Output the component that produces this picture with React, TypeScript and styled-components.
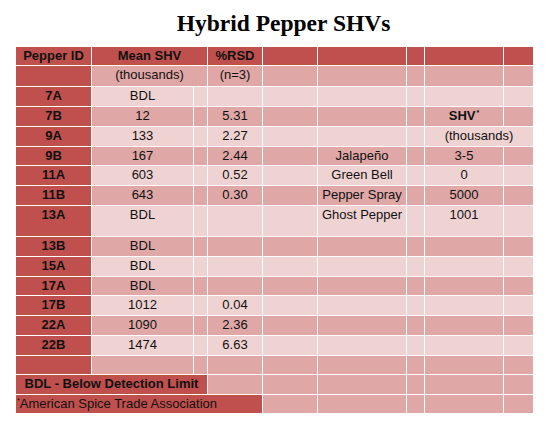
import React from 'react'
import styled, { createGlobalStyle } from 'styled-components'

const GlobalStyle = createGlobalStyle`
  html, body {
    margin: 0;
    padding: 0;
    background: #fff;
  }
`

type Tone = 'dark' | 'mid' | 'light'

const tones: Record<Tone, string> = {
  dark: '#c0504d',
  mid: '#dfa7a6',
  light: '#efd3d2',
}

const Page = styled.div`
  width: 550px;
  height: 423px;
  box-sizing: border-box;
  padding: 9px 0 0 16px;
  font-family: 'Liberation Sans', Arial, sans-serif;
  color: #111;
`

const Title = styled.h1`
  margin: 0 0 10px;
  width: 517px;
  box-sizing: border-box;
  padding-left: 18px;
  height: 28px;
  line-height: 28px;
  text-align: center;
  font-family: 'Liberation Serif', 'Times New Roman', serif;
  font-weight: bold;
  font-size: 23.5px;
  color: #000;
`

const Table = styled.div`
  width: 517px;
  display: flex;
  flex-direction: column;
  gap: 1px;
  background: #fff;
`

const Row = styled.div<{ $h: number }>`
  display: grid;
  grid-template-columns: 75px 101px 13px 54px 54px 88px 17px 78px 29px;
  column-gap: 1px;
  height: ${(p) => p.$h}px;
`

const Cell = styled.div<{ $tone: Tone; $span: number; $bold: boolean; $left: boolean }>`
  grid-column: span ${(p) => p.$span};
  background: ${(p) => tones[p.$tone]};
  box-sizing: border-box;
  padding: 1px 0 0 ${(p) => (p.$left ? '1px' : '0')};
  font-size: 13px;
  line-height: 15px;
  font-weight: ${(p) => (p.$bold ? 'bold' : 'normal')};
  text-align: ${(p) => (p.$left ? 'left' : 'center')};
  white-space: nowrap;
  overflow: visible;
`

const Sup = styled.span`
  font-size: 7px;
  line-height: 0;
  vertical-align: 5px;
  margin-left: 1px;
`

const Mark = styled.span`
  font-size: 7px;
  line-height: 0;
  vertical-align: 5px;
`

interface CellData {
  text?: React.ReactNode
  span?: number
  tone?: Tone
  bold?: boolean
  left?: boolean
}

interface RowData {
  h: number
  tone: Tone
  cells: CellData[]
}

// a body row: id, mean, gap, rsd, gap, pepper, gap, shv, gap
const bodyRow = (
  h: number,
  tone: Tone,
  id: string,
  mean = '',
  rsd = '',
  pepper = '',
  shv: React.ReactNode = '',
): RowData => ({
  h,
  tone,
  cells: [
    { text: id, tone: 'dark', bold: true },
    { text: mean },
    {},
    { text: rsd },
    {},
    { text: pepper },
    {},
    { text: shv },
    {},
  ],
})

const rows: RowData[] = [
  {
    h: 18,
    tone: 'dark',
    cells: [
      { text: 'Pepper ID', bold: true },
      { text: 'Mean SHV', span: 2, bold: true },
      { text: '%RSD', bold: true },
      {},
      {},
      {},
      {},
      {},
    ],
  },
  {
    h: 20,
    tone: 'mid',
    cells: [
      { tone: 'dark' },
      { text: '(thousands)', span: 2 },
      { text: '(n=3)' },
      {},
      {},
      {},
      {},
      {},
    ],
  },
  bodyRow(19, 'light', '7A', 'BDL'),
  {
    ...bodyRow(19, 'mid', '7B', '12', '5.31'),
    cells: [
      { text: '7B', tone: 'dark', bold: true },
      { text: '12' },
      {},
      { text: '5.31' },
      {},
      {},
      {},
      {
        text: (
          <>
            SHV<Sup>*</Sup>
          </>
        ),
        bold: true,
      },
      {},
    ],
  },
  {
    h: 19,
    tone: 'light',
    cells: [
      { text: '9A', tone: 'dark', bold: true },
      { text: '133' },
      {},
      { text: '2.27' },
      {},
      {},
      {},
      { text: '(thousands)', span: 2 },
    ],
  },
  bodyRow(18, 'mid', '9B', '167', '2.44', 'Jalapeño', '3-5'),
  bodyRow(19, 'light', '11A', '603', '0.52', 'Green Bell', '0'),
  bodyRow(19, 'mid', '11B', '643', '0.30', 'Pepper Spray', '5000'),
  bodyRow(30, 'light', '13A', 'BDL', '', 'Ghost Pepper', '1001'),
  bodyRow(19, 'mid', '13B', 'BDL'),
  bodyRow(19, 'light', '15A', 'BDL'),
  bodyRow(18, 'mid', '17A', 'BDL'),
  bodyRow(19, 'light', '17B', '1012', '0.04'),
  bodyRow(19, 'mid', '22A', '1090', '2.36'),
  bodyRow(19, 'light', '22B', '1474', '6.63'),
  bodyRow(18, 'mid', ''),
  {
    h: 19,
    tone: 'mid',
    cells: [
      { text: 'BDL - Below Detection Limit', span: 3, tone: 'dark', bold: true },
      {},
      {},
      {},
      {},
      {},
      {},
    ],
  },
  {
    h: 18,
    tone: 'mid',
    cells: [
      {
        text: (
          <>
            <Mark>*</Mark>American Spice Trade Association
          </>
        ),
        span: 4,
        tone: 'dark',
        left: true,
      },
      {},
      {},
      {},
      {},
      {},
    ],
  },
]

const App: React.FC = () => {
  return (
    <Page>
      <GlobalStyle />
      <Title>Hybrid Pepper SHVs</Title>
      <Table>
        {rows.map((row, i) => (
          <Row key={i} $h={row.h}>
            {row.cells.map((c, j) => (
              <Cell
                key={j}
                $tone={c.tone ?? row.tone}
                $span={c.span ?? 1}
                $bold={!!c.bold}
                $left={!!c.left}
              >
                {c.text}
              </Cell>
            ))}
          </Row>
        ))}
      </Table>
    </Page>
  )
}

export default App
